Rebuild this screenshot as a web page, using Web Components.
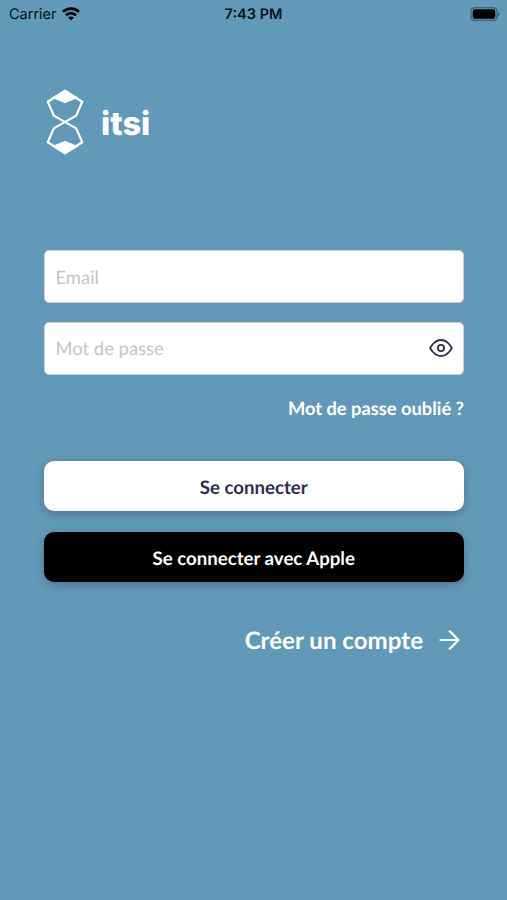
<!DOCTYPE html>
<html lang="fr">
<head>
  <meta charset="UTF-8">
  <meta name="viewport" content="width=device-width, initial-scale=1.0">
  <title>itsi</title>
  <style>
    body {
      margin: 0;
      background-color: #6399b8;
      font-family: Lato, sans-serif;
      text-rendering: geometricPrecision;
    }
  </style>
</head>
<body>
  <login-screen></login-screen>

  <script>
    class StatusBar extends HTMLElement {
      connectedCallback() {
        this.attachShadow({ mode: 'open' });
        this.shadowRoot.innerHTML = `
          <style>
            :host {
              display: grid;
              grid-template-columns: 1fr auto 1fr;
              align-items: center;
              height: 27px;
              padding: 0 6px 0 9px;
              box-sizing: border-box;
              font-family: Inter, sans-serif;
              font-size: 14.5px;
              color: #07131a;
            }
            .carrier {
              display: flex;
              align-items: center;
              gap: 5px;
            }
            .carrier span,
            .time {
              padding-top: 2px;
            }
            .time {
              font-weight: 600;
              margin-right: 3px;
            }
            .battery {
              justify-self: end;
            }
            svg {
              display: block;
            }
          </style>
          <div class="carrier">
            <span>Carrier</span>
            <svg width="18" height="14" viewBox="0 0 18 14" fill="none" stroke="#000" stroke-width="2.6">
              <path d="M1 4.8a11.6 11.6 0 0 1 16 0"/>
              <path d="M4 8.2a7.2 7.2 0 0 1 10 0"/>
              <path d="M9 13.5l-2.8-2.9a3.9 3.9 0 0 1 5.6 0z" fill="#000" stroke="none"/>
            </svg>
          </div>
          <span class="time">7:43 PM</span>
          <svg class="battery" width="31" height="14" viewBox="0 0 31 14">
            <rect x="1" y="0.7" width="26" height="12.6" rx="3.6" fill="none" stroke="#365669" stroke-width="1.1"/>
            <rect x="2.7" y="2.3" width="22.6" height="9.4" rx="2" fill="#000"/>
            <path d="M28.4 4.9c1.8.6 1.8 3.6 0 4.2z" fill="#365669"/>
          </svg>
        `;
      }
    }

    class BrandLogo extends HTMLElement {
      connectedCallback() {
        this.attachShadow({ mode: 'open' });
        this.shadowRoot.innerHTML = `
          <style>
            :host {
              display: flex;
              align-items: center;
              gap: 17px;
              color: #fff;
            }
            svg {
              display: block;
            }
            .name {
              padding-top: 3px;
              font-family: Inter, sans-serif;
              font-size: 32.5px;
              line-height: 40px;
              font-weight: 800;
            }
          </style>
          <svg width="38" height="66" viewBox="0 0 38 66" fill="none" stroke="#fff" stroke-width="2.2" stroke-linejoin="round">
            <path d="M19 1.8L36.2 12.8 30.2 26.6 7.8 39.4 1.8 53.2 19 64.2 36.2 53.2 30.2 39.4 7.8 26.6 1.8 12.8z"/>
            <path d="M19 1.8L31.5 8.6 19 13.6 6.5 8.6zM19 52.4L31.5 57.4 19 64.2 6.5 57.4z" fill="#fff" stroke-width="1"/>
          </svg>
          <span class="name">itsi</span>
        `;
      }
    }

    class TextField extends HTMLElement {
      connectedCallback() {
        this.attachShadow({ mode: 'open' });
        this.shadowRoot.innerHTML = `
          <style>
            :host {
              display: flex;
              align-items: center;
              justify-content: space-between;
              height: 53px;
              padding: 0 10px 0 11px;
              box-sizing: border-box;
              background-color: #fff;
              border: 1px solid #c5cede;
              border-radius: 5px;
              color: #c5c5c7;
              font-size: 18.4px;
            }
          </style>
          <span><slot></slot></span>
          <slot name="icon"></slot>
        `;
      }
    }

    class EyeIcon extends HTMLElement {
      connectedCallback() {
        this.attachShadow({ mode: 'open' });
        this.shadowRoot.innerHTML = `
          <style>
            :host {
              display: block;
            }
            svg {
              display: block;
            }
          </style>
          <svg width="24" height="20" viewBox="0 0 24 20" fill="none" stroke="#302d45" stroke-width="1.8" stroke-linejoin="round">
            <path d="M1.2 10S5 2 12 2s10.8 8 10.8 8S19 18 12 18 1.2 10 1.2 10z"/>
            <circle cx="12" cy="10" r="3.1"/>
          </svg>
        `;
      }
    }

    class ActionButton extends HTMLElement {
      connectedCallback() {
        this.attachShadow({ mode: 'open' });
        this.shadowRoot.innerHTML = `
          <style>
            :host {
              display: block;
            }
            button {
              display: block;
              width: 100%;
              height: 49.5px;
              padding: 1px 0 0;
              border: 0;
              border-radius: 10px;
              background-color: #fff;
              color: #302b50;
              font: inherit;
              font-size: 18.65px;
              font-weight: 700;
              text-rendering: inherit;
              box-shadow: 0 3px 10px rgba(50, 60, 75, 0.38);
              cursor: pointer;
            }
            :host([dark]) button {
              background-color: #000;
              color: #fff;
            }
          </style>
          <button><slot></slot></button>
        `;
      }
    }

    class LoginScreen extends HTMLElement {
      connectedCallback() {
        this.attachShadow({ mode: 'open' });
        this.shadowRoot.innerHTML = `
          <style>
            :host {
              display: block;
              min-height: 900px;
              color: #fff;
            }
            main {
              display: flex;
              flex-direction: column;
              padding: 62px 43px 0 43.5px;
            }
            brand-logo {
              margin: 0 0 95.4px 2.5px;
            }
            .fields {
              display: grid;
              gap: 18.6px;
            }
            .forgot {
              align-self: flex-end;
              margin: 21px 0 41.5px;
              font-size: 18.3px;
              line-height: 24px;
              font-weight: 700;
            }
            .buttons {
              display: grid;
              gap: 21.5px;
            }
            .create {
              display: flex;
              align-items: center;
              align-self: flex-end;
              gap: 16px;
              margin: 42px 4px 0 0;
              font-size: 24.1px;
              line-height: 32px;
              font-weight: 700;
            }
            .create span {
              padding-top: 1px;
            }
          </style>
          <status-bar></status-bar>
          <main>
            <brand-logo></brand-logo>
            <div class="fields">
              <text-field>Email</text-field>
              <text-field>Mot de passe<eye-icon slot="icon"></eye-icon></text-field>
            </div>
            <span class="forgot">Mot de passe oublié ?</span>
            <div class="buttons">
              <action-button>Se connecter</action-button>
              <action-button dark>Se connecter avec Apple</action-button>
            </div>
            <div class="create">
              <span>Créer un compte</span>
              <svg width="21" height="20" viewBox="0 0 21 20" fill="none" stroke="#fff" stroke-width="2.2" stroke-linecap="round" stroke-linejoin="round">
                <path d="M1.5 10h18M10.8 1.3L19.5 10l-8.7 8.7"/>
              </svg>
            </div>
          </main>
        `;
      }
    }

    customElements.define('status-bar', StatusBar);
    customElements.define('brand-logo', BrandLogo);
    customElements.define('text-field', TextField);
    customElements.define('eye-icon', EyeIcon);
    customElements.define('action-button', ActionButton);
    customElements.define('login-screen', LoginScreen);
  </script>
</body>
</html>
